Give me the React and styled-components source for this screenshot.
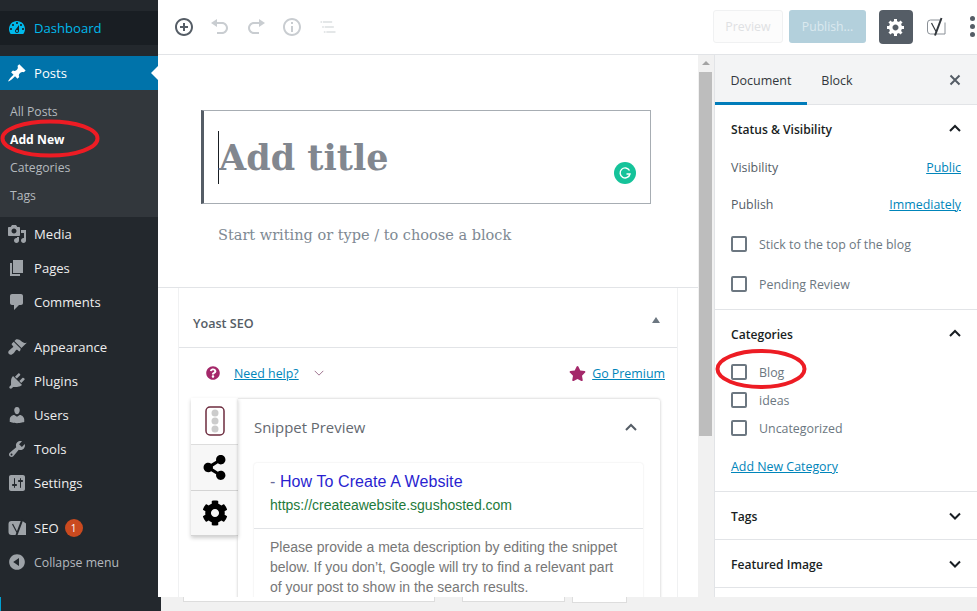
import React from "react";
import styled, { createGlobalStyle } from "styled-components";
import { FaShareAlt, FaCog, FaStar, FaQuestionCircle } from "react-icons/fa";

const GlobalStyle = createGlobalStyle`
  html, body {
    margin: 0;
    padding: 0;
    background: #f1f1f1;
    overflow: hidden;
  }
  * { box-sizing: border-box; }
`;

const UI = `"Open Sans", "Noto Sans", sans-serif`;
const SERIF = `"DejaVu Serif", "Liberation Serif", serif`;
const ARIAL = `"Liberation Sans", Arial, sans-serif`;

const Page = styled.div`
  position: relative;
  width: 977px;
  height: 611px;
  overflow: hidden;
  font-family: ${UI};
  background: #f1f1f1;
`;

const Body = styled.div`
  display: flex;
  height: 597px;
`;

/* admin sidebar */
const Sidebar = styled.nav`
  width: 158px;
  flex: none;
  background: #23282d;
  padding-top: 11px;
`;

const MenuRow = styled.div`
  height: 34px;
  display: flex;
  align-items: center;
  position: relative;
  padding-left: 7px;
  gap: 7px;
  font-size: 13.1px;
  color: ${({ $color }) => $color || "#eee"};
  background: ${({ $bg }) => $bg || "transparent"};
  margin-bottom: ${({ $gap }) => ($gap ? "11px" : 0)};
  svg { flex: none; fill: ${({ $icon }) => $icon || "#9ea3a8"}; }
`;

const CollapseLabel = styled.span`
  font-size: 12.3px;
`;

const Notch = styled.span`
  position: absolute;
  right: 0;
  top: 10px;
  width: 0;
  height: 0;
  border: 7px solid transparent;
  border-left: 0;
  border-right-color: #fff;
`;

const Submenu = styled.div`
  background: #32373c;
  padding: 7px 0 8px 10px;
`;

const SubItem = styled.div`
  height: 28px;
  display: flex;
  align-items: center;
  font-size: 12.2px;
  font-weight: ${({ $active }) => ($active ? 700 : 400)};
  color: ${({ $active }) => ($active ? "#fff" : "#b4b9be")};
`;

const Badge = styled.span`
  width: 18px;
  height: 18px;
  margin-left: -1px;
  border-radius: 50%;
  background: #ca4a1f;
  color: #fff;
  font-size: 10px;
  display: flex;
  align-items: center;
  justify-content: center;
`;

/* main column */
const Main = styled.div`
  flex: 1;
  min-width: 0;
  display: flex;
  flex-direction: column;
  background: #fff;
`;

const TopBar = styled.header`
  height: 55px;
  flex: none;
  border-bottom: 1px solid #e2e4e7;
  display: flex;
  align-items: center;
  padding: 0 0 1px 16px;
  background: #fff;
`;

const ToolIcon = styled.svg`
  width: 20px;
  height: 20px;
  margin-right: ${({ $mr }) => $mr || 16}px;
  fill: ${({ $color }) => $color || "#c9cdd1"};
  flex: none;
`;

const Spacer = styled.div`
  flex: 1;
`;

const PreviewButton = styled.div`
  width: 70px;
  height: 33px;
  border: 1px solid #f0f1f2;
  border-radius: 3px;
  background: #fcfcfc;
  color: #dfe1e3;
  font-size: 12.4px;
  display: flex;
  align-items: center;
  justify-content: center;
  margin-right: 6px;
`;

const PublishButton = styled.div`
  width: 77px;
  height: 33px;
  border-radius: 3px;
  background: #b3d0dc;
  color: #dbe9ef;
  font-size: 12.2px;
  display: flex;
  align-items: center;
  justify-content: center;
  margin-right: 13px;
`;

const GearButton = styled.div`
  width: 34px;
  height: 34px;
  border-radius: 4px;
  background: #555d66;
  display: flex;
  align-items: center;
  justify-content: center;
  margin-right: 13px;
  svg { fill: #fff; }
`;

const Dots = styled.div`
  display: flex;
  flex-direction: column;
  gap: 3px;
  margin: 0 2px 0 24px;
  span {
    width: 5px;
    height: 5px;
    border-radius: 50%;
    background: #555d66;
  }
`;

const Workspace = styled.div`
  flex: 1;
  min-height: 0;
  display: flex;
`;

/* editor */
const Editor = styled.section`
  width: 540px;
  flex: none;
  overflow: hidden;
  background: #fff;
`;

const TitleArea = styled.div`
  padding: 55px 47px 0 43px;
`;

const TitleBox = styled.div`
  position: relative;
  height: 94px;
  border: 1px solid #a7adb3;
  border-left: 3px solid #555d66;
  padding: 20px 0 0 14px;
  display: flex;
`;

const Caret = styled.span`
  width: 1px;
  height: 53px;
  background: #191e23;
  flex: none;
`;

const TitleText = styled.div`
  font-family: ${SERIF};
  font-weight: 700;
  font-size: 35px;
  line-height: 53px;
  color: #82878f;
`;

const Grammarly = styled.div`
  position: absolute;
  right: 14px;
  bottom: 19px;
  width: 22px;
  height: 22px;
  border-radius: 50%;
  background: #15c39a;
  display: flex;
  align-items: center;
  justify-content: center;
`;

const BlockHint = styled.div`
  font-family: ${SERIF};
  font-size: 14.5px;
  line-height: 24px;
  color: #7e8993;
  padding: 19px 0 40px 60px;
`;

const MetaWrap = styled.div`
  border-top: 1px solid #e2e4e7;
  padding: 0 20px;
`;

const MetaBox = styled.div`
  border-left: 1px solid #f0f1f2;
  border-right: 1px solid #f0f1f2;
  height: 320px;
`;

const MetaHead = styled.div`
  height: 60px;
  display: flex;
  align-items: center;
  justify-content: space-between;
  padding: 12px 17px 0 14px;
  border-bottom: 1px solid #e2e4e7;
  font-size: 12.6px;
  font-weight: 600;
  color: #555d66;
`;

const TriangleUp = styled.span`
  width: 0;
  height: 0;
  border: 4px solid transparent;
  border-top: 0;
  border-bottom: 6px solid #6c7781;
  margin-bottom: 8px;
`;

const HelpRow = styled.div`
  height: 50px;
  display: flex;
  align-items: center;
  padding: 0 12px 0 27px;
  gap: 14px;
  svg.help { fill: #a4286a; }
`;

const BlueLink = styled.a`
  color: #0085ba;
  text-decoration: underline;
  font-size: ${({ $size }) => $size || 12.4}px;
`;

const GoPremium = styled.div`
  margin-left: auto;
  display: flex;
  align-items: center;
  gap: 6px;
  svg { fill: #a4286a; }
`;

const SeoPanel = styled.div`
  display: flex;
  margin: 0 17px 0 12px;
`;

const SeoTabs = styled.div`
  width: 47px;
  flex: none;
  box-shadow: 0 2px 4px rgba(0, 0, 0, 0.2);
  align-self: flex-start;
`;

const SeoTab = styled.div`
  height: ${({ $h }) => $h}px;
  background: ${({ $active }) => ($active ? "#fff" : "#f7f7f7")};
  border-bottom: ${({ $active }) => ($active ? "1px solid #ddd" : "1px solid #d4d4d4")};
  display: flex;
  align-items: center;
  justify-content: center;
  svg { fill: #000; }
`;

const SeoContent = styled.div`
  flex: 1;
  min-width: 0;
  border-top: 1px solid #e8e8e8;
  border-radius: 0 3px 0 0;
  box-shadow: 0 1px 3px rgba(0, 0, 0, 0.25);
  padding: 0 17px 0 16px;
  height: 210px;
`;

const SeoHead = styled.div`
  height: 64px;
  display: flex;
  align-items: center;
  justify-content: space-between;
  padding: 0 5px 8px 0;
  font-size: 14.9px;
  color: #646970;
`;

const SerpCard = styled.div`
  border-radius: 3px;
  box-shadow: 0 0 2px rgba(0, 0, 0, 0.12);
  font-family: ${ARIAL};
  height: 160px;
`;

const SerpHead = styled.div`
  height: 66px;
  padding: 9px 16px 0;
  border-bottom: 1px solid #e2e4e7;
`;

const SerpTitle = styled.div`
  font-size: 16px;
  line-height: 20px;
  letter-spacing: 0.08px;
  color: #6a6a9a;
  span { color: #2a1fd0; }
`;

const SerpUrl = styled.div`
  font-size: 14px;
  line-height: 18px;
  margin-top: 4px;
  color: #1e7a3b;
`;

const SerpDesc = styled.div`
  font-size: 14px;
  line-height: 20px;
  color: #777;
  padding: 8px 16px 0;
`;

/* scrollbar */
const ScrollTrack = styled.div`
  width: 16px;
  flex: none;
  background: #f1f1f1;
  padding: 17px 2px 0 1px;
  position: relative;
`;

const ScrollArrow = styled.span`
  position: absolute;
  top: 6px;
  left: 4px;
  width: 0;
  height: 0;
  border: 4px solid transparent;
  border-top: 0;
  border-bottom: 4px solid #a3a3a3;
`;

const ScrollThumb = styled.div`
  height: 364px;
  background: #bdbdbd;
`;

/* settings sidebar */
const Settings = styled.aside`
  flex: 1;
  min-width: 0;
  background: #fff;
  border-left: 1px solid #e2e4e7;
  overflow: hidden;
`;

const TabBar = styled.div`
  height: 50px;
  background: #f3f4f5;
  border-bottom: 1px solid #e2e4e7;
  display: flex;
  align-items: stretch;
  position: relative;
`;

const Tab = styled.div`
  width: ${({ $w }) => $w}px;
  display: flex;
  align-items: center;
  justify-content: center;
  padding-top: 4px;
  font-size: 12.5px;
  color: #32373c;
  border-bottom: 3px solid ${({ $active }) => ($active ? "#007cba" : "transparent")};
  margin-bottom: -1px;
`;

const CloseIcon = styled.svg`
  margin: auto 16px auto auto;
  align-self: center;
  stroke: #555d66;
  stroke-width: 2;
  fill: none;
`;

const Panel = styled.div`
  border-bottom: 1px solid #e2e4e7;
  padding: 0 15px 0 16px;
  height: ${({ $h }) => $h}px;
`;

const PanelHead = styled.div`
  height: 48px;
  display: flex;
  align-items: center;
  justify-content: space-between;
  padding-top: ${({ $closed }) => ($closed ? "1px" : 0)};
  font-size: 12.1px;
  font-weight: 600;
  color: #191e23;
  svg { stroke: #191e23; stroke-width: 2; fill: none; margin-top: -2px; }
`;

const InfoRow = styled.div`
  height: 28px;
  margin-bottom: 9px;
  padding-right: 1px;
  display: flex;
  align-items: center;
  justify-content: space-between;
  font-size: 12.4px;
  color: #555d66;
`;

const CheckRow = styled.div`
  height: ${({ $h }) => $h || 40}px;
  display: flex;
  align-items: center;
  gap: 12px;
  font-size: 12.4px;
  color: #6c7781;
`;

const CheckList = styled.div`
  margin-top: -3px;
`;

const CheckBox = styled.span`
  width: 16px;
  height: 16px;
  border: 2px solid #6c7781;
  border-radius: 2px;
  background: #fff;
  flex: none;
`;

const AddCategory = styled.div`
  margin-top: 14px;
  line-height: 18px;
`;

/* bottom strip */
const Strip = styled.div`
  height: 14px;
  display: flex;
  align-items: flex-start;
  background: #f1f1f1;
`;

const StripDark = styled.div`
  width: 161px;
  height: 14px;
  background: #23282d;
  border-left: 1px solid #00a0d2;
  margin-right: 22px;
`;

const StripStub = styled.div`
  width: ${({ $w }) => $w}px;
  height: ${({ $h }) => $h || 5}px;
  margin-right: ${({ $mr }) => $mr}px;
  background: #fff;
  border: 1px solid #ddd;
  border-top: 0;
`;

/* hand drawn markup over the screenshot */
const Annotation = styled.svg`
  position: absolute;
  left: ${({ $x }) => $x}px;
  top: ${({ $y }) => $y}px;
  fill: none;
  stroke: #ed1c24;
  stroke-width: 4;
  pointer-events: none;
`;

const Chevron = ({ up, size = 14, color, width = 2 }) => (
  <svg width={size} height={size} viewBox="0 0 14 14" fill="none" stroke={color} strokeWidth={width}>
    <path d={up ? "M2 10l5-5 5 5" : "M2 4.5l5 5 5-5"} />
  </svg>
);

const Dash = ({ d, size = 20 }) => (
  <svg width={size} height={size} viewBox="0 0 20 20">
    <path d={d} />
  </svg>
);

// box with the slashed y, outlined in the toolbar and filled in the menu
const YoastLogo = ({ box, glyph, boxStroke = "none" }) => (
  <svg width="20" height="20" viewBox="0 0 20 20">
    <path
      d="M15.500 3H4.500a3 3 0 0 0-3 3v8a3 3 0 0 0 3 3H19V5.500"
      style={{ fill: box, stroke: boxStroke }}
      strokeWidth="1"
    />
    <path d="M5.500 6l4.500 8.500" style={{ fill: "none", stroke: glyph }} strokeWidth="1.200" />
    <path d="M15.500 1L9 18.500" style={{ fill: "none", stroke: glyph }} strokeWidth="2" />
  </svg>
);

const ICONS = {
  dashboard:
    "M3.76 16h12.48c1.100-1.370 1.760-3.110 1.760-5 0-4.420-3.580-8-8-8s-8 3.580-8 8c0 1.890.66 3.630 1.760 5zM10 4c.55 0 1 .45 1 1s-.45 1-1 1-1-.45-1-1 .45-1 1-1zM6 6c.55 0 1 .45 1 1s-.45 1-1 1-1-.45-1-1 .45-1 1-1zm8 0c.55 0 1 .45 1 1s-.45 1-1 1-1-.45-1-1 .45-1 1-1zm-5.370 5.550L12 7v6c0 1.100-.9 2-2 2s-2-.9-2-2c0-.57.24-1.080.63-1.450zM4 10c.55 0 1 .45 1 1s-.45 1-1 1-1-.45-1-1 .45-1 1-1zm12 0c.55 0 1 .45 1 1s-.45 1-1 1-1-.45-1-1 .45-1 1-1zm-5 3c0-.55-.45-1-1-1s-1 .45-1 1 .45 1 1 1 1-.45 1-1z",
  post:
    "M10.440 3.020l1.820-1.820 6.360 6.350-1.830 1.820c-1.050-.68-2.480-.57-3.410.36l-.75.75c-.92.93-1.040 2.350-.35 3.410l-1.830 1.820-2.410-2.410-2.800 2.790c-.42.42-3.380 2.710-3.800 2.290s1.860-3.390 2.280-3.810l2.790-2.790L4.100 9.360l1.830-1.820c1.050.69 2.480.57 3.400-.36l.75-.75c.93-.92 1.050-2.350.36-3.410z",
  media:
    "M13 11V4c0-.55-.45-1-1-1h-1.670L9 1H5L3.670 3H2c-.55 0-1 .45-1 1v7c0 .55.45 1 1 1h10c.55 0 1-.45 1-1zM7 4.500c1.380 0 2.500 1.120 2.500 2.500S8.380 9.500 7 9.500 4.500 8.380 4.500 7 5.620 4.500 7 4.500zM14 6h5v10.500c0 1.380-1.120 2.500-2.500 2.500S14 17.880 14 16.500s1.120-2.500 2.500-2.500c.17 0 .34.02.5.05V9h-3V6zm-4 8.050V13h2v3.500c0 1.380-1.120 2.500-2.500 2.500S7 17.880 7 16.500 8.120 14 9.500 14c.17 0 .34.02.5.05z",
  page: "M6 15V2h10v13H6zm-1 1h8v2H3V5h2v11z",
  comments:
    "M5 2h9c1.100 0 2 .9 2 2v7c0 1.100-.9 2-2 2h-2l-5 5v-5H5c-1.100 0-2-.9-2-2V4c0-1.100.9-2 2-2z",
  appearance:
    "M14.480 11.060L7.410 3.990l1.500-1.500c.5-.56 2.300-.47 3.510.32 1.210.8 1.430 1.280 2.910 2.100 1.180.64 2.450 1.260 4.450.85zm-.71.71L6.700 4.700 4.930 6.470c-.39.39-.39 1.020 0 1.410l1.060 1.060c.39.39.39 1.030 0 1.420-.6.6-1.430 1.150-2.210 1.700-.35.23-.7.51-1.010.82C1.430 13.730.5 15.500 2 17s3.270.570 4.620-.8c.31-.31.590-.66.820-1.010.55-.78 1.100-1.610 1.700-2.210.39-.39 1.030-.39 1.420 0l1.060 1.060c.39.39 1.020.39 1.410 0z",
  plugins:
    "M13.110 4.360L9.870 7.600 8 5.730l3.240-3.240c.35-.34 1.050-.2 1.560.32.52.51.66 1.210.31 1.550zm-8 1.770l.91-1.120 9.010 9.010-1.190.84c-.71.71-2.630 1.160-3.820 1.160H6.140L4.900 17.260c-.59.59-1.540.59-2.120 0-.59-.58-.59-1.530 0-2.120l1.240-1.240v-3.880c0-1.130.4-3.190 1.090-3.890zm7.260 3.970l3.240-3.240c.34-.35 1.040-.21 1.550.31.52.51.66 1.210.31 1.550l-3.240 3.250z",
  users:
    "M10 9.250c-2.270 0-2.730-3.440-2.730-3.440C7 4.020 7.820 2 9.970 2c2.160 0 2.980 2.020 2.710 3.810 0 0-.41 3.440-2.680 3.440zm0 2.570L12.720 10c2.390 0 4.520 2.330 4.520 4.530v2.490s-3.650 1.130-7.240 1.130c-3.650 0-7.240-1.130-7.240-1.130v-2.490c0-2.250 1.940-4.480 4.470-4.480z",
  tools:
    "M16.680 9.770c-1.340 1.340-3.300 1.670-4.950.99l-5.410 6.520c-.99.99-2.590.99-3.580 0s-.99-2.590 0-3.570l6.520-5.420c-.68-1.650-.35-3.610.99-4.950 1.280-1.280 3.120-1.620 4.720-1.060l-2.890 2.890 2.820 2.820 2.860-2.870c.53 1.580.18 3.390-1.080 4.650zM3.810 16.210c.4.39 1.040.39 1.430 0 .4-.4.4-1.040 0-1.430-.39-.4-1.030-.4-1.430 0-.39.39-.39 1.030 0 1.430z",
  settings:
    "M18 16V4c0-1.100-.9-2-2-2H4c-1.100 0-2 .9-2 2v12c0 1.100.9 2 2 2h12c1.100 0 2-.9 2-2zM8 11h1c.55 0 1 .45 1 1s-.45 1-1 1H8v1.500c0 .28-.22.5-.5.5s-.5-.22-.5-.5V13H6c-.55 0-1-.45-1-1s.45-1 1-1h1V5.500c0-.28.22-.5.5-.5s.5.22.5.5V11zm5-2h-1c-.55 0-1-.45-1-1s.45-1 1-1h1V5.500c0-.28.22-.5.5-.5s.5.22.5.5V7h1c.55 0 1 .45 1 1s-.45 1-1 1h-1v5.500c0 .28-.22.5-.5.5s-.5-.22-.5-.5V9z",
  collapse:
    "M10 2.160c4.330 0 7.840 3.510 7.840 7.840s-3.510 7.840-7.840 7.840S2.160 14.330 2.160 10 5.710 2.160 10 2.160zm2 11.720V6.120L6.180 9.970z",
  gear:
    "M18 12h-2.180c-.17.7-.44 1.350-.81 1.930l1.540 1.540-2.100 2.100-1.540-1.540c-.58.36-1.230.63-1.910.79V19H8v-2.180c-.68-.16-1.330-.43-1.910-.79l-1.540 1.540-2.120-2.120 1.540-1.540c-.36-.58-.63-1.230-.79-1.910H1V9.030h2.170c.16-.7.44-1.350.8-1.940L2.430 5.550l2.100-2.100 1.540 1.540c.58-.37 1.240-.64 1.930-.81V2h3v2.180c.68.16 1.330.43 1.910.79l1.540-1.540 2.120 2.120-1.540 1.540c.36.59.64 1.240.8 1.940H18V12zm-8.500 1.500c1.660 0 3-1.340 3-3s-1.340-3-3-3-3 1.340-3 3 1.340 3 3 3z",
};

const TOP_MENU = [
  { label: "Media", icon: ICONS.media },
  { label: "Pages", icon: ICONS.page },
  { label: "Comments", icon: ICONS.comments, gap: true },
  { label: "Appearance", icon: ICONS.appearance },
  { label: "Plugins", icon: ICONS.plugins },
  { label: "Users", icon: ICONS.users },
  { label: "Tools", icon: ICONS.tools },
  { label: "Settings", icon: ICONS.settings, gap: true },
];

const SUB_MENU = ["All Posts", "Add New", "Categories", "Tags"];

const AdminMenu = () => (
  <Sidebar>
    <MenuRow $bg="#191e23" $color="#00b9eb" $icon="#00b9eb" $gap>
      <Dash d={ICONS.dashboard} />
      Dashboard
    </MenuRow>
    <MenuRow $bg="#0073aa" $color="#fff" $icon="#fff">
      <Dash d={ICONS.post} />
      Posts
      <Notch />
    </MenuRow>
    <Submenu>
      {SUB_MENU.map((item) => (
        <SubItem key={item} $active={item === "Add New"}>
          {item}
        </SubItem>
      ))}
    </Submenu>
    {TOP_MENU.map((item) => (
      <MenuRow key={item.label} $gap={item.gap}>
        <Dash d={item.icon} />
        {item.label}
      </MenuRow>
    ))}
    <MenuRow>
      <YoastLogo box="#9ea3a8" glyph="#23282d" />
      SEO
      <Badge>1</Badge>
    </MenuRow>
    <MenuRow $color="#b4b9be">
      <Dash d={ICONS.collapse} />
      <CollapseLabel>Collapse menu</CollapseLabel>
    </MenuRow>
  </Sidebar>
);

const Toolbar = () => (
  <TopBar>
    <ToolIcon viewBox="0 0 20 20" $color="#555d66">
      <path d="M10 1c-5 0-9 4-9 9s4 9 9 9 9-4 9-9-4-9-9-9zm0 16c-3.900 0-7-3.100-7-7s3.100-7 7-7 7 3.100 7 7-3.100 7-7 7zm1-11H9v3H6v2h3v3h2v-3h3V9h-3V6z" />
    </ToolIcon>
    <ToolIcon viewBox="0 0 20 20">
      <path d="M12 5H7V2L1 6l6 4V7h5c2.200 0 4 1.800 4 4s-1.800 4-4 4H7v2h5c3.300 0 6-2.700 6-6s-2.700-6-6-6z" />
    </ToolIcon>
    <ToolIcon viewBox="0 0 20 20">
      <path d="M8 5h5V2l6 4-6 4V7H8c-2.200 0-4 1.800-4 4s1.800 4 4 4h5v2H8c-3.300 0-6-2.700-6-6s2.700-6 6-6z" />
    </ToolIcon>
    <ToolIcon viewBox="0 0 20 20">
      <path d="M10 1c-5 0-9 4-9 9s4 9 9 9 9-4 9-9-4-9-9-9zm0 16c-3.900 0-7-3.100-7-7s3.100-7 7-7 7 3.100 7 7-3.100 7-7 7zM9 9h2v6H9zm0-4h2v2H9z" />
    </ToolIcon>
    <ToolIcon viewBox="0 0 24 24" $color="#dcdfe1">
      <path d="M5 5H3v2h2V5zm3 8h11v-2H8v2zm9-8H6v2h11V5zM7 11H5v2h2v-2zm0 8h2v-2H7v2zm3-2v2h11v-2H10z" />
    </ToolIcon>
    <Spacer />
    <PreviewButton>Preview</PreviewButton>
    <PublishButton>Publish...</PublishButton>
    <GearButton>
      <Dash d={ICONS.gear} />
    </GearButton>
    <YoastLogo box="none" boxStroke="#8a9097" glyph="#32373c" />
    <Dots>
      <span />
      <span />
      <span />
    </Dots>
  </TopBar>
);

const TrafficLight = () => (
  <svg width="20" height="30" viewBox="0 0 20 30">
    <rect x="1" y="1" width="18" height="28" rx="4" fill="#fff" stroke="#6d2c3f" strokeWidth="1.500" />
    <circle cx="10" cy="7" r="3.500" fill="#ccc" />
    <circle cx="10" cy="15" r="3.500" fill="#ccc" />
    <circle cx="10" cy="23" r="3.500" fill="#ccc" />
  </svg>
);

const YoastBox = () => (
  <MetaWrap>
    <MetaBox>
      <MetaHead>
        Yoast SEO
        <TriangleUp />
      </MetaHead>
      <HelpRow>
        <FaQuestionCircle className="help" size={14} />
        <BlueLink>Need help?</BlueLink>
        <Chevron size={12} color="#8f5d7d" width={1} />
        <GoPremium>
          <FaStar size={17} />
          <BlueLink>Go Premium</BlueLink>
        </GoPremium>
      </HelpRow>
      <SeoPanel>
        <SeoTabs>
          <SeoTab $active $h={47}>
            <TrafficLight />
          </SeoTab>
          <SeoTab $h={46}>
            <FaShareAlt size={25} />
          </SeoTab>
          <SeoTab $h={45}>
            <FaCog size={26} />
          </SeoTab>
        </SeoTabs>
        <SeoContent>
          <SeoHead>
            Snippet Preview
            <Chevron up size={14} color="#555d66" />
          </SeoHead>
          <SerpCard>
            <SerpHead>
              <SerpTitle>
                - <span>How To Create A Website</span>
              </SerpTitle>
              <SerpUrl>https://createawebsite.sgushosted.com</SerpUrl>
            </SerpHead>
            <SerpDesc>
              Please provide a meta description by editing the snippet below. If you don’t, Google will
              try to find a relevant part of your post to show in the search results.
            </SerpDesc>
          </SerpCard>
        </SeoContent>
      </SeoPanel>
    </MetaBox>
  </MetaWrap>
);

const EditorPane = () => (
  <Editor>
    <TitleArea>
      <TitleBox>
        <Caret />
        <TitleText>Add title</TitleText>
        <Grammarly>
          <svg width="14" height="14" viewBox="0 0 14 14" fill="none" stroke="#fff" strokeWidth="1.400">
            <path d="M11.500 4.500A5 5 0 1 0 12 8H8.500" />
          </svg>
        </Grammarly>
      </TitleBox>
    </TitleArea>
    <BlockHint>Start writing or type / to choose a block</BlockHint>
    <YoastBox />
  </Editor>
);

const SettingsPane = () => (
  <Settings>
    <TabBar>
      <Tab $active $w={92}>Document</Tab>
      <Tab $w={60}>Block</Tab>
      <CloseIcon width="12" height="12" viewBox="0 0 12 12">
        <path d="M1.500 1.500l9 9M10.500 1.500l-9 9" />
      </CloseIcon>
    </TabBar>
    <Panel $h={205}>
      <PanelHead>
        Status &amp; Visibility
        <Chevron up />
      </PanelHead>
      <InfoRow>
        Visibility
        <BlueLink>Public</BlueLink>
      </InfoRow>
      <InfoRow>
        Publish
        <BlueLink>Immediately</BlueLink>
      </InfoRow>
      <CheckList>
        <CheckRow>
          <CheckBox />
          Stick to the top of the blog
        </CheckRow>
        <CheckRow>
          <CheckBox />
          Pending Review
        </CheckRow>
      </CheckList>
    </Panel>
    <Panel $h={182}>
      <PanelHead>
        Categories
        <Chevron up />
      </PanelHead>
      <CheckRow $h={28}>
        <CheckBox />
        Blog
      </CheckRow>
      <CheckRow $h={28}>
        <CheckBox />
        ideas
      </CheckRow>
      <CheckRow $h={28}>
        <CheckBox />
        Uncategorized
      </CheckRow>
      <AddCategory>
        <BlueLink>Add New Category</BlueLink>
      </AddCategory>
    </Panel>
    <Panel $h={48}>
      <PanelHead $closed>
        Tags
        <Chevron />
      </PanelHead>
    </Panel>
    <Panel $h={48}>
      <PanelHead $closed>
        Featured Image
        <Chevron />
      </PanelHead>
    </Panel>
  </Settings>
);

const App = () => (
  <Page>
    <GlobalStyle />
    <Body>
      <AdminMenu />
      <Main>
        <Toolbar />
        <Workspace>
          <EditorPane />
          <ScrollTrack>
            <ScrollArrow />
            <ScrollThumb />
          </ScrollTrack>
          <SettingsPane />
        </Workspace>
      </Main>
    </Body>
    <Strip>
      <StripDark />
      <StripStub $w={252} $mr={27} />
      <StripStub $w={103} $mr={7} />
      <StripStub $w={55} $mr={0} $h={6} />
    </Strip>
    <Annotation $x={0} $y={119} width="101" height="40" viewBox="0 0 101 40">
      <ellipse cx="50" cy="19.500" rx="47.500" ry="17" />
    </Annotation>
    <Annotation $x={715} $y={349} width="92" height="41" viewBox="0 0 92 41">
      <ellipse cx="46" cy="20" rx="43.500" ry="18" />
    </Annotation>
  </Page>
);

export default App;
